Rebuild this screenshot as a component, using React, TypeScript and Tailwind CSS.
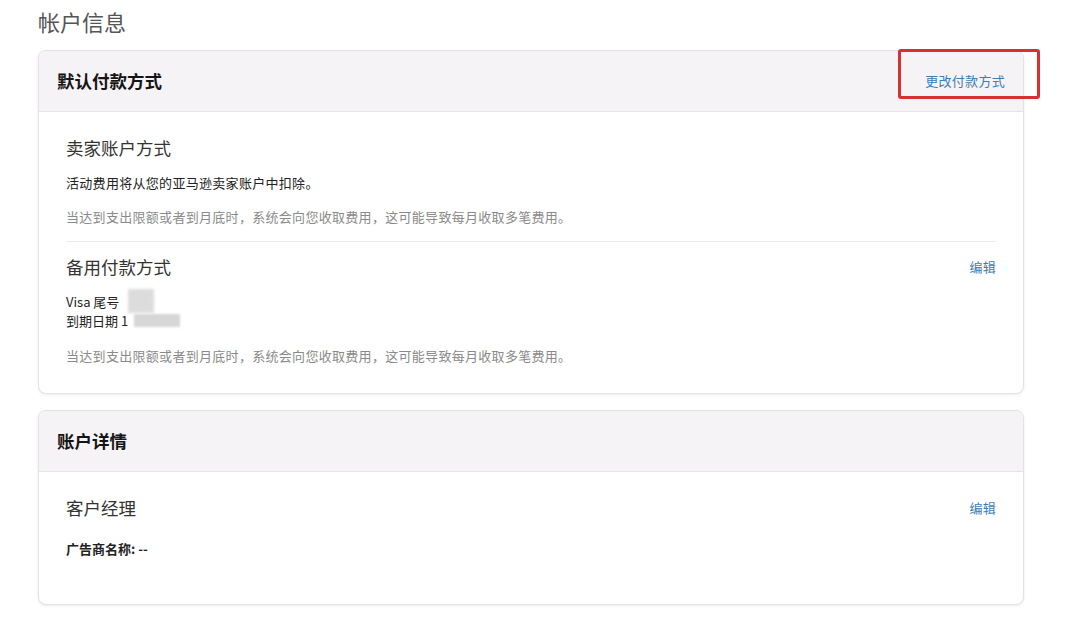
import React from "react";

const font = { fontFamily: '"Noto Sans CJK SC", "Noto Sans", sans-serif' };

function Card({ title, children, extra }: { title: string; children: React.ReactNode; extra?: React.ReactNode }) {
  return (
    <div className="relative w-[986px] rounded-lg border border-[#e4e2e4] bg-white shadow-[0_1px_3px_rgba(0,0,0,0.08)]">
      <div className="flex h-[61px] items-center justify-between rounded-t-lg border-b border-[#e6e4e6] bg-[#f5f3f5] pl-[18px] pr-[18px]">
        <div className="text-[17.5px] font-bold leading-6 text-[#151515]">{title}</div>
        {extra}
      </div>
      {children}
    </div>
  );
}

const Heading = ({ children }: { children: React.ReactNode }) => (
  <div className="text-[17.5px] leading-6 text-[#333]">{children}</div>
);

const Link = ({ children }: { children: React.ReactNode }) => (
  <span className="text-[13px] leading-5 tracking-[0.3px] text-[#3c7db3]">{children}</span>
);

export default function App() {
  const note = "当达到支出限额或者到月底时，系统会向您收取费用，这可能导致每月收取多笔费用。";
  return (
    <div className="min-h-[628px] bg-white pl-[38px]" style={font}>
      <div className="pt-[9px] text-[22px] leading-[24px] text-[#555]">帐户信息</div>
      <div className="mt-[17px]">
        <Card
          title="默认付款方式"
          extra={
            <>
              <Link>更改付款方式</Link>
              <div className="absolute right-[-17px] top-[-2px] h-[50px] w-[142px] rounded-[3px] border-[3px] border-[#d8302c]" />
            </>
          }
        >
          <div className="px-[27px]">
            <div className="border-b border-[#ebebeb] pb-[14px] pt-[24px]">
              <Heading>卖家账户方式</Heading>
              <div className="mt-[13px] text-[13px] leading-5 tracking-[0.3px] text-[#222]">活动费用将从您的亚马逊卖家账户中扣除。</div>
              <div className="mt-[14px] text-[13px] leading-5 tracking-[0.3px] text-[#8a8a8a]">{note}</div>
            </div>
            <div className="pb-[27px] pt-[13px]">
              <div className="flex items-center justify-between">
                <Heading>备用付款方式</Heading>
                <Link>编辑</Link>
              </div>
              <div className="relative mt-[13px] text-[13px] leading-[19px] text-[#222]">
                <div>Visa 尾号</div>
                <div className="flex items-center">
                  <span>到期日期 1</span>
                  <span className="ml-[6px] inline-block h-[13px] w-[46px] bg-[#d6d6d6] blur-[1px]" />
                </div>
                <div className="absolute left-[62px] top-[-3px] h-[24px] w-[26px] bg-[#dcdcdc] blur-[1.5px]" />
              </div>
              <div className="mt-[16px] text-[13px] leading-5 tracking-[0.3px] text-[#8a8a8a]">{note}</div>
            </div>
          </div>
        </Card>
      </div>
      <div className="mt-[16px]">
        <Card title="账户详情">
          <div className="px-[27px] pb-[45px] pt-[24px]">
            <div className="flex items-center justify-between">
              <Heading>客户经理</Heading>
              <Link>编辑</Link>
            </div>
            <div className="mt-[19px] text-[13px] font-bold leading-5 text-[#222]">广告商名称: --</div>
          </div>
        </Card>
      </div>
    </div>
  );
}
